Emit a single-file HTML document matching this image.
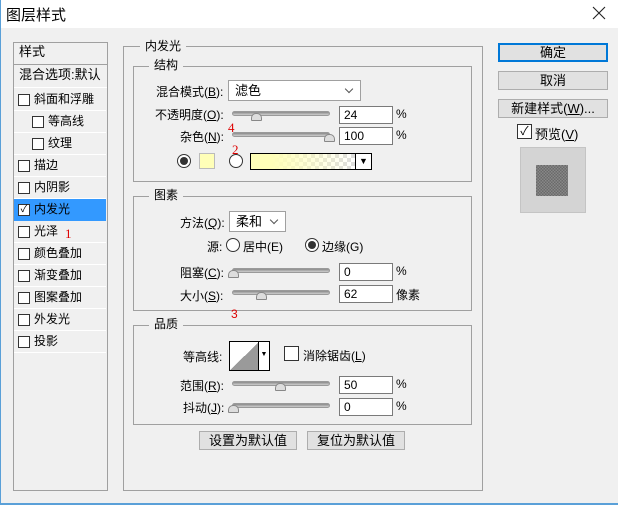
<!DOCTYPE html>
<html><head><meta charset="utf-8"><style>
*{box-sizing:border-box;margin:0;padding:0}
body{width:618px;height:505px;position:relative;background:#f0f0f0;font-family:"Liberation Sans","Noto Sans CJK SC","WenQuanYi Zen Hei",sans-serif;font-size:12px;color:#000;overflow:hidden}
.a{position:absolute;white-space:nowrap}
.box{position:absolute;border:1px solid #a0a0a0}
.lg{position:absolute;background:#f0f0f0;padding:0 5px;line-height:14px}
.cb{position:absolute;width:12px;height:12px;border:1px solid #333;background:#fff}
.item{position:absolute;left:14px;width:92px;height:22px;line-height:21px;padding-left:20px;border-bottom:1px solid #fff}
.item .cb{left:4px;top:5px}
.inp{position:absolute;width:54px;height:18px;border:1px solid #7a7a7a;background:#fff;padding-left:4px;line-height:16px}
.trk{position:absolute;width:98px;height:5px;border-radius:3px;background:linear-gradient(#8a8a8a,#cfcfcf);border:1px solid #9a9a9a}
.th{position:absolute;width:11px;height:8px;background:#ddd;border:1px solid #888;border-radius:5px 5px 1px 1px}
.btn{position:absolute;height:19px;border:1px solid #adadad;background:#e1e1e1;text-align:center;line-height:17px;font-size:13px}
.rad{position:absolute;width:14px;height:14px;border:1px solid #333;border-radius:50%;background:#fff}
.rad.on::after{content:"";position:absolute;left:2px;top:2px;width:8px;height:8px;border-radius:50%;background:#333}
.sel{position:absolute;border:1px solid #a0a0a0;background:#fff;padding-left:6px;line-height:19px;font-size:13px}
.sel::after{content:"";position:absolute;right:8px;top:5px;width:5px;height:5px;border-right:1px solid #555;border-bottom:1px solid #555;transform:rotate(45deg)}
.red{position:absolute;color:#d00;font-size:13px;font-family:"Liberation Serif",serif}
</style></head><body>
<div class="a" style="left:0;top:0;width:618px;height:28px;background:#fff"></div>
<div class="a" style="left:0;top:0;width:1px;height:505px;background:#5aa0d8"></div>
<div class="a" style="left:0;top:503px;width:618px;height:2px;background:#5aa0d8"></div>
<div class="a" style="left:6px;top:4px;font-size:15px">图层样式</div>
<svg class="a" style="left:592px;top:6px" width="14" height="14"><path d="M1 1L13 13M13 1L1 13" stroke="#222" stroke-width="1.1"/></svg>

<div class="box" style="left:13px;top:42px;width:95px;height:449px;background:#f0f0f0"></div>
<div class="a" style="left:14px;top:42px;width:93px;height:23px;border-bottom:1px solid #a0a0a0;padding-left:5px;line-height:20px;font-size:13px">样式</div>
<div class="a" style="left:14px;top:65px;width:93px;height:23px;border-bottom:1px solid #fff;padding-left:5px;line-height:20px;font-size:13px">混合选项:默认</div>
<div class="item" style="top:89px"><span class="cb"></span>斜面和浮雕</div>
<div class="item" style="top:111px;padding-left:34px"><span class="cb" style="left:18px"></span>等高线</div>
<div class="item" style="top:133px;padding-left:34px"><span class="cb" style="left:18px"></span>纹理</div>
<div class="item" style="top:155px"><span class="cb"></span>描边</div>
<div class="item" style="top:177px"><span class="cb"></span>内阴影</div>
<div class="item" style="top:199px;background:#3399ff;border-bottom-color:#3399ff"><span class="cb" style="font-size:10px;line-height:9px;text-align:center">✓</span>内发光</div>
<div class="item" style="top:221px"><span class="cb"></span>光泽</div>
<div class="item" style="top:243px"><span class="cb"></span>颜色叠加</div>
<div class="item" style="top:265px"><span class="cb"></span>渐变叠加</div>
<div class="item" style="top:287px"><span class="cb"></span>图案叠加</div>
<div class="item" style="top:309px"><span class="cb"></span>外发光</div>
<div class="item" style="top:331px"><span class="cb"></span>投影</div>
<div class="red" style="left:65px;top:226px">1</div>

<div class="box" style="left:123px;top:46px;width:360px;height:445px"></div>
<div class="lg" style="left:140px;top:39px">内发光</div>
<div class="box" style="left:133px;top:66px;width:339px;height:116px"></div>
<div class="lg" style="left:149px;top:58px">结构</div>
<div class="a" style="left:156px;top:83px">混合模式(<u>B</u>):</div>
<div class="sel" style="left:228px;top:80px;width:133px;height:21px">滤色</div>
<div class="a" style="left:155px;top:106px">不透明度(<u>O</u>):</div>
<div class="trk" style="left:232px;top:111px"></div><div class="th" style="left:251px;top:113px"></div>
<div class="inp" style="left:339px;top:106px">24</div><div class="a" style="left:396px;top:107px">%</div>
<div class="a" style="left:180px;top:128px">杂色(<u>N</u>):</div>
<div class="trk" style="left:232px;top:132px"></div><div class="th" style="left:324px;top:134px"></div>
<div class="inp" style="left:339px;top:127px">100</div><div class="a" style="left:396px;top:128px">%</div>
<div class="red" style="left:228px;top:120px">4</div>
<div class="red" style="left:232px;top:142px">2</div>
<div class="rad on" style="left:177px;top:154px"></div>
<div class="a" style="left:199px;top:153px;width:16px;height:16px;background:#ffffb8;border:1px solid #bbb"></div>
<div class="rad" style="left:229px;top:154px"></div>
<div class="a" style="left:250px;top:153px;width:106px;height:17px;border:1px solid #000;background:linear-gradient(90deg,#ffffb8 20%,rgba(255,255,200,0)),repeating-conic-gradient(#ddd 0 25%,#fff 0 50%) 0 0/8px 8px"></div>
<div class="a" style="left:355px;top:153px;width:17px;height:17px;border:1px solid #000;background:#fff;font-size:9px;text-align:center;line-height:15px">▼</div>

<div class="box" style="left:133px;top:196px;width:339px;height:115px"></div>
<div class="lg" style="left:149px;top:188px">图素</div>
<div class="a" style="left:180px;top:214px">方法(<u>Q</u>):</div>
<div class="sel" style="left:229px;top:211px;width:57px;height:21px">柔和</div>
<div class="a" style="left:207px;top:238px">源:</div>
<div class="rad" style="left:226px;top:238px"></div><div class="a" style="left:243px;top:238px">居中(E)</div>
<div class="rad on" style="left:305px;top:238px"></div><div class="a" style="left:322px;top:238px">边缘(G)</div>
<div class="a" style="left:180px;top:264px">阻塞(<u>C</u>):</div>
<div class="trk" style="left:232px;top:268px"></div><div class="th" style="left:228px;top:270px"></div>
<div class="inp" style="left:339px;top:263px">0</div><div class="a" style="left:396px;top:264px">%</div>
<div class="a" style="left:180px;top:287px">大小(<u>S</u>):</div>
<div class="trk" style="left:232px;top:290px"></div><div class="th" style="left:256px;top:292px"></div>
<div class="inp" style="left:339px;top:285px">62</div><div class="a" style="left:396px;top:286px">像素</div>
<div class="red" style="left:231px;top:307px;font-family:'Liberation Sans',sans-serif;font-size:12px">3</div>

<div class="box" style="left:133px;top:325px;width:339px;height:100px"></div>
<div class="lg" style="left:149px;top:317px">品质</div>
<div class="a" style="left:183px;top:348px">等高线:</div>
<div class="a" style="left:229px;top:341px;width:41px;height:30px;border:1px solid #000;background:linear-gradient(to top left,#9a9a9a 50%,#fff 50%) 0 0/29px 100% no-repeat,#fff"></div>
<div class="a" style="left:258px;top:341px;width:12px;height:30px;border:1px solid #000;background:#fff;font-size:7px;text-align:center;line-height:26px">▼</div>
<div class="cb" style="left:284px;top:346px;width:15px;height:15px"></div>
<div class="a" style="left:303px;top:347px">消除锯齿(<u>L</u>)</div>
<div class="a" style="left:180px;top:377px">范围(<u>R</u>):</div>
<div class="trk" style="left:232px;top:381px"></div><div class="th" style="left:275px;top:383px"></div>
<div class="inp" style="left:339px;top:376px">50</div><div class="a" style="left:396px;top:377px">%</div>
<div class="a" style="left:183px;top:399px">抖动(<u>J</u>):</div>
<div class="trk" style="left:232px;top:403px"></div><div class="th" style="left:228px;top:405px"></div>
<div class="inp" style="left:339px;top:398px">0</div><div class="a" style="left:396px;top:399px">%</div>

<div class="btn" style="left:199px;top:431px;width:98px">设置为默认值</div>
<div class="btn" style="left:307px;top:431px;width:98px">复位为默认值</div>

<div class="btn" style="left:498px;top:43px;width:110px;border:2px solid #0078d7;line-height:15px">确定</div>
<div class="btn" style="left:498px;top:71px;width:110px">取消</div>
<div class="btn" style="left:498px;top:99px;width:110px">新建样式(<u>W</u>)...</div>
<div class="cb" style="left:517px;top:124px;width:15px;height:15px;font-size:12px;line-height:12px;text-align:center">✓</div>
<div class="a" style="left:535px;top:124px;font-size:13px">预览(<u>V</u>)</div>
<div class="a" style="left:520px;top:147px;width:66px;height:66px;background:#d4d4d4;border:1px solid #c4c4c4"></div>
<div class="a" style="left:536px;top:165px;width:32px;height:31px;background:repeating-conic-gradient(#6a6a6a 0 25%,#888 0 50%) 0 0/3px 3px"></div>
</body></html>
